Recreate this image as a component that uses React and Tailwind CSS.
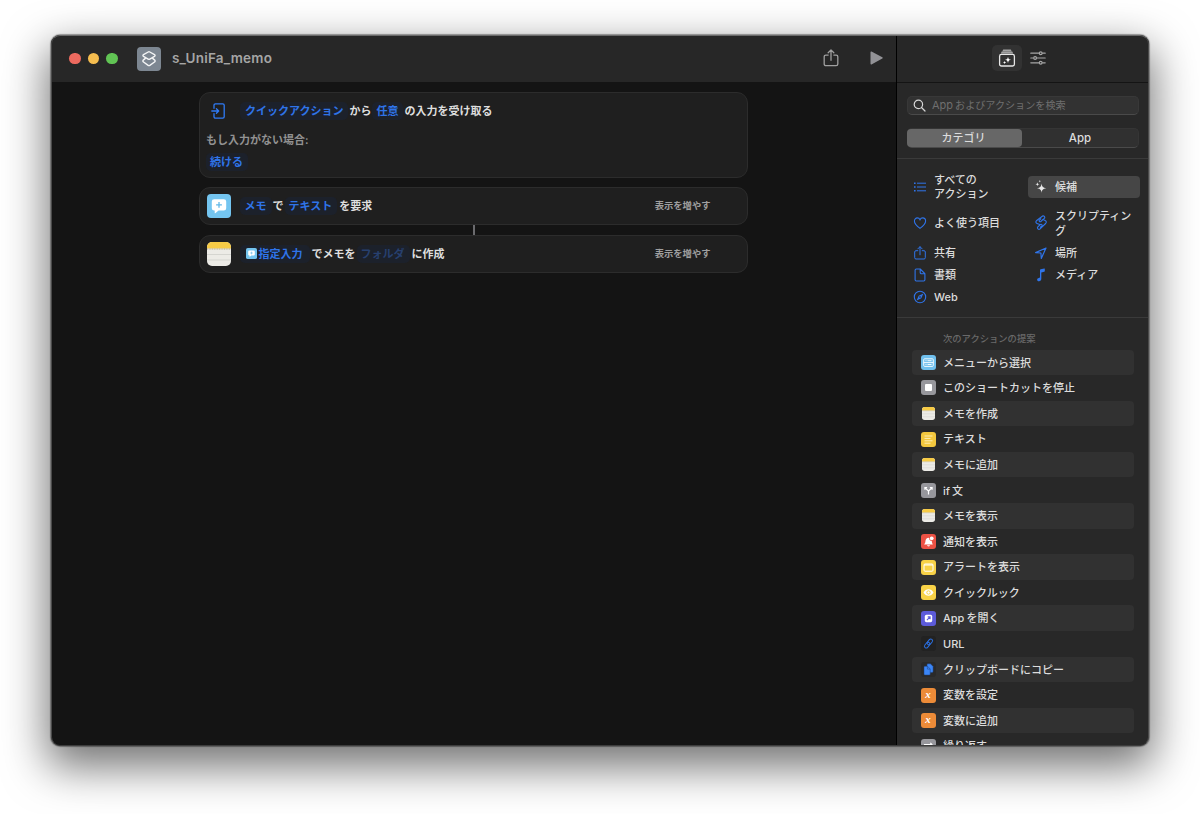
import clsx from 'clsx';

const IconList = () => (
    <svg width="14" height="14" viewBox="0 0 14 14" fill="none" stroke="currentColor" strokeWidth="1">
        <path d="M4 3.200h9M4 7h9M4 10.800h9" />
        <path d="M1 3.200h1.600M1 7h1.600M1 10.800h1.600" strokeWidth="1.400" />
    </svg>
);

const IconSparkles = () => (
    <svg width="14" height="14" viewBox="0 0 14 14" fill="currentColor">
        <path d="M7.600 3.600c.4 3.200 1.200 4.100 4.600 4.700-3.400.6-4.200 1.500-4.600 4.700-.4-3.200-1.200-4.100-4.600-4.700 3.400-.6 4.200-1.500 4.600-4.700z" />
        <path d="M3.400 2.200c.2 1.300.6 1.800 2 2-1.400.2-1.800.7-2 2-.2-1.300-.6-1.800-2-2 1.400-.2 1.800-.7 2-2zM5.800 0c.1.8.4 1.100 1.200 1.200-.8.1-1.100.4-1.200 1.200-.1-.8-.4-1.100-1.200-1.200.8-.1 1.100-.4 1.200-1.200z" />
    </svg>
);

const IconHeart = () => (
    <svg width="14" height="14" viewBox="0 0 14 14" fill="none" stroke="currentColor" strokeWidth="1.100">
        <path d="M7 12.400C3.500 10 1.400 7.600 1.400 5.100 1.400 3.200 2.700 1.900 4.300 1.900c1.200 0 2.200.7 2.700 1.800.5-1.100 1.500-1.800 2.700-1.800 1.600 0 2.900 1.300 2.900 3.200 0 2.500-2.100 4.900-5.600 7.300z" />
    </svg>
);

const IconScript = () => (
    <svg width="14" height="16" viewBox="0 0 14 16" fill="none" stroke="currentColor" strokeWidth="1.100" strokeLinejoin="round" strokeLinecap="round">
        <path d="M8.300 1.200 2.700 5.500c-1.300 1-1 2.500.3 3l2.800 1.100M8.300 1.200c1.500-1 3.200.9 2 2.200L6.800 6.500c-1 .8-2.200-.4-1.400-1.400l1.400-1.200" />
        <path d="m9 4.600 2.200 1c1.300.6 1.500 2 .4 2.900L6.100 13.900M6.100 13.900c-1.500 1.200-3.500-.6-2.300-2.100l2.600-2.300c1.100-.8 2.300.4 1.500 1.400l-1.500 1.300" />
    </svg>
);

const IconShare = ({ size = 14 }) => (
    <svg width={size} height={size} viewBox="0 0 14 14" fill="none" stroke="currentColor" strokeWidth="1" strokeLinecap="round" strokeLinejoin="round">
        <path d="M4.800 4.700H3A1.300 1.300 0 0 0 1.700 6v5.700A1.300 1.300 0 0 0 3 13h8a1.300 1.300 0 0 0 1.300-1.300V6A1.300 1.300 0 0 0 11 4.700H9.200M7 8.800V.8M4.800 2.900 7 .7l2.200 2.200" />
    </svg>
);

const IconLocation = () => (
    <svg width="14" height="14" viewBox="0 0 14 14" fill="none" stroke="currentColor" strokeWidth="1.200" strokeLinejoin="round">
        <path d="M12 2 1.600 6.600l5.300.4.400 5.400z" />
    </svg>
);

const IconDoc = () => (
    <svg width="14" height="14" viewBox="0 0 14 14" fill="none" stroke="currentColor" strokeWidth="1.100" strokeLinejoin="round">
        <path d="M7.200 1H3.300A1.200 1.200 0 0 0 2.100 2.200v9.600A1.200 1.200 0 0 0 3.300 13h7.400a1.200 1.200 0 0 0 1.200-1.200V5.700zM7.200 1v3.500a1.200 1.200 0 0 0 1.200 1.200h3.500" />
    </svg>
);

const IconMusic = () => (
    <svg width="14" height="14" viewBox="0 0 14 14" fill="currentColor">
        <path d="M6 2.200c0-.5.300-.8.700-.9L10.300.6c.3 0 .5.100.5.400v2c0 .4-.2.700-.6.800l-2.900.6v6.300c0 1.400-.9 2.300-2.200 2.500-1.200.1-2-.6-2-1.500 0-1 .8-1.600 1.800-1.800C5.700 9.700 6 9.500 6 8.900z" />
    </svg>
);

const IconSafari = () => (
    <svg width="14" height="14" viewBox="0 0 14 14" fill="none" stroke="currentColor" strokeWidth="1.100">
        <circle cx="7" cy="7" r="5.700" />
        <path d="M10.400 3.600 8.300 8.300 3.600 10.400l2.100-4.700z" fill="currentColor" stroke="none" />
        <circle cx="7" cy="7" r=".8" fill="#282828" stroke="none" />
    </svg>
);

const ShortcutsLogo = () => (
    <svg width="16" height="18" viewBox="0 0 16 18" fill="none" stroke="#f4f5f6" strokeWidth="1.400" strokeLinejoin="round">
        <path d="M7.200 2 2.500 4.700c-.8.500-.8 1.200 0 1.700l4.700 2.700c.5.300 1.100.3 1.600 0l4.700-2.700c.8-.5.8-1.200 0-1.700L8.800 2c-.5-.3-1.100-.3-1.600 0z" />
        <path d="M4.700 8.100 2.500 9.900c-.8.600-.8 1.500 0 2.100l4.700 3.400c.5.300 1.100.3 1.600 0l4.700-3.400c.8-.6.8-1.500 0-2.100l-2.200-1.800" />
    </svg>
);

const IconLibrary = () => (
    <svg width="18" height="18" viewBox="0 0 18 18" fill="none" stroke="#e6e6e6" strokeWidth="1.300">
        <path d="M5.200.4h7.600l.8 1.800H4.400zM3.700 2.600h10.600l.9 1.800H2.800z" fill="#a2a2a2" stroke="none" />
        <rect x="1.600" y="5.400" width="14.800" height="11.600" rx="1.800" />
        <path d="M10 7.400c.3 2.400.9 3.100 3.200 3.400-2.300.3-2.900 1-3.200 3.400-.3-2.400-.9-3.100-3.200-3.400 2.300-.3 2.900-1 3.200-3.400z" fill="#fff" stroke="none" />
        <path d="M6.600 11.700c.2 1.200.5 1.600 1.700 1.800-1.200.2-1.500.6-1.700 1.800-.2-1.200-.5-1.600-1.700-1.800 1.200-.2 1.500-.6 1.700-1.800z" fill="#fff" stroke="none" />
    </svg>
);

const IconSliders = () => (
    <svg width="16" height="14" viewBox="0 0 16 14" fill="none" stroke="#a6a6a6" strokeWidth="1.200" strokeLinecap="round">
        <path d="M.8 2.200h8M12.600 2.200h2.600M.8 7h2.400M7 7h8.200M.8 11.800h8M12.600 11.800h2.600" />
        <circle cx="10.700" cy="2.200" r="1.400" />
        <circle cx="5.100" cy="7" r="1.400" />
        <circle cx="10.700" cy="11.800" r="1.400" />
    </svg>
);

const IconInput = () => (
    <svg width="15" height="16" viewBox="0 0 15 16" fill="none" stroke="#2f7bf6" strokeWidth="1.300" strokeLinecap="round" strokeLinejoin="round">
        <path d="M3 5.300V2.300A1.400 1.400 0 0 1 4.400.9h7.400a1.400 1.400 0 0 1 1.400 1.400v11.400a1.400 1.400 0 0 1-1.400 1.400H4.400A1.400 1.400 0 0 1 3 13.700v-3M.8 8h6.800M5.400 5.700 7.700 8l-2.300 2.300" />
    </svg>
);

const AskIcon = ({ size }) => (
    <svg width={size} height={size} viewBox="0 0 24 24" className="shrink-0">
        <rect width="24" height="24" rx="4" fill="#74c5f0" />
        <path d="M7.200 5.200h9.600a2.400 2.400 0 0 1 2.400 2.400v6.600a2.400 2.400 0 0 1-2.400 2.400h-5.200l-3.300 2.600c-.3.200-.6 0-.6-.3v-2.300h-.5a2.400 2.400 0 0 1-2.400-2.400V7.600a2.400 2.400 0 0 1 2.400-2.400z" fill="#fff" />
        <path d="M12 8v5.800M9.100 10.900h5.800" stroke="#62b8e8" strokeWidth="1.300" />
    </svg>
);

const NotesIcon = ({ size }) => (
    <svg width={size} height={size} viewBox="0 0 24 24" className="shrink-0">
        <rect width="24" height="24" rx="5" fill="#ecebe6" />
        <path d="M0 6.500V5a5 5 0 0 1 5-5h14a5 5 0 0 1 5 5v1.500z" fill="#f7cb45" />
        <path d="M0 7h24" stroke="#b3a98c" strokeWidth="1" strokeDasharray="1 .7" />
        <path d="M0 12.500h24M0 18h24" stroke="#d3d2cd" strokeWidth=".9" />
    </svg>
);

const Tile = ({ className, children }) => (
    <span className={clsx('flex h-[15px] w-[15px] items-center justify-center rounded-[3px]', className)}>
        {children}
    </span>
);

const Glyph = ({ children, ...rest }) => (
    <svg width="15" height="15" viewBox="0 0 15 15" fill="none" stroke="#fff" {...rest}>{children}</svg>
);

const VariableTile = () => (
    <Tile className="bg-[#ec8b38]">
        <span className="font-['Liberation_Serif',serif] text-[11px] leading-[11px] font-bold italic text-white -mt-[2px]">x</span>
    </Tile>
);

const categories = [
    { label: ['すべての', 'アクション'], icon: IconList },
    { label: ['候補'], icon: IconSparkles, active: true },
    { label: ['よく使う項目'], icon: IconHeart },
    { label: ['スクリプティン', 'グ'], icon: IconScript },
    { label: ['共有'], icon: IconShare },
    { label: ['場所'], icon: IconLocation },
    { label: ['書類'], icon: IconDoc },
    { label: ['メディア'], icon: IconMusic },
    { label: ['Web'], icon: IconSafari },
];

const suggestions = [
    {
        label: 'メニューから選択',
        icon: (
            <Tile className="bg-[#70c0ee]">
                <Glyph strokeWidth=".9"><rect x="2.700" y="3.800" width="9.600" height="7.600" rx="1" /><path d="M2.700 7.600h9.600M4.500 5.700h1M6.500 5.700h4M4.500 9.500h1M6.500 9.500h4" /></Glyph>
            </Tile>
        ),
    },
    {
        label: 'このショートカットを停止',
        icon: <Tile className="bg-[#97979c]"><span className="h-[7px] w-[7px] rounded-[1px] bg-white" /></Tile>,
    },
    { label: 'メモを作成', icon: <NotesIcon size={13} /> },
    {
        label: 'テキスト',
        icon: (
            <Tile className="bg-[#f3c73e]">
                <Glyph strokeWidth=".9" stroke="#fff3c4"><path d="M3.500 4h8M3.500 6.400h6M3.500 8.800h8M3.500 11.200h6" /></Glyph>
            </Tile>
        ),
    },
    { label: 'メモに追加', icon: <NotesIcon size={13} /> },
    {
        latin: 'if',
        label: '文',
        icon: (
            <Tile className="bg-[#97979c]">
                <Glyph strokeWidth="1.200"><path d="M7.500 11.600V8.200L4.400 5M7.500 8.200l3.100-3.200M3.900 6.700V4.500h2.200M8.900 4.500h2.200v2.200" /></Glyph>
            </Tile>
        ),
    },
    { label: 'メモを表示', icon: <NotesIcon size={13} /> },
    {
        label: '通知を表示',
        icon: (
            <Tile className="bg-[#ec5245]">
                <Glyph fill="#fff" stroke="none"><path d="M3.200 10.600c0-.7 1.100-1.200 1.200-3 .1-2.400 1.200-3.700 3.500-3.800.1 1.900 1.100 3 2.900 3.200 0 2 .9 2.600 1 3.600zM6 11.200h3c-.2.800-.8 1.200-1.500 1.200S6.200 12 6 11.200z" /><circle cx="10.700" cy="4.300" r="1.900" /></Glyph>
            </Tile>
        ),
    },
    {
        label: 'アラートを表示',
        icon: (
            <Tile className="bg-[#f8d247]">
                <Glyph strokeWidth="1"><rect x="3" y="4" width="9" height="7.200" rx="1" /><path d="M3 5h9" /></Glyph>
            </Tile>
        ),
    },
    {
        label: 'クイックルック',
        icon: (
            <Tile className="bg-[#f8d247]">
                <Glyph stroke="none" fill="#fff"><path d="M2.500 7.500C3.800 5.300 5.500 4.300 7.500 4.300s3.700 1 5 3.200c-1.300 2.200-3 3.200-5 3.200s-3.700-1-5-3.200z" /><circle cx="7.500" cy="7.500" r="1.700" fill="none" stroke="#f8d247" strokeWidth="1" /></Glyph>
            </Tile>
        ),
    },
    {
        latin: 'App',
        label: 'を開く',
        icon: (
            <Tile className="bg-[#5c5bd9]">
                <Glyph stroke="#5c5bd9" strokeWidth="1.100"><rect x="3.800" y="3.800" width="7.400" height="7.400" rx="1.600" fill="#fff" stroke="none" /><path d="M5.900 9.100 9 6M6.700 5.900h2.400v2.400" /></Glyph>
            </Tile>
        ),
    },
    {
        label: 'URL',
        icon: (
            <Tile className="bg-[#222222]">
                <Glyph stroke="#2b6fe0" strokeWidth="1"><g transform="rotate(-50 7.500 7.500)"><rect x="2.200" y="5.700" width="6.400" height="3.600" rx="1.800" /><rect x="6.400" y="5.700" width="6.400" height="3.600" rx="1.800" /></g></Glyph>
            </Tile>
        ),
    },
    {
        label: 'クリップボードにコピー',
        icon: (
            <Tile className="bg-[#2a2a2a]">
                <Glyph stroke="#1f3f78" strokeWidth=".5" fill="#3b86f7"><path d="M6 2.600c0-.5.300-.8.800-.8h2.700l2.600 2.600v5.200c0 .5-.3.800-.8.800H6z" /><path d="M3 5c0-.5.300-.8.800-.8h2.700L9.200 7v5.200c0 .5-.3.800-.8.800H3.800c-.5 0-.8-.3-.8-.8z" /><path d="M6.400 4.300v2.800h2.800" fill="none" /></Glyph>
            </Tile>
        ),
    },
    { label: '変数を設定', icon: <VariableTile /> },
    { label: '変数に追加', icon: <VariableTile /> },
    {
        label: '繰り返す',
        icon: (
            <Tile className="bg-[#97979c]">
                <Glyph strokeWidth="1.100"><path d="M3.500 7V5.500h7.300M9.300 3.800l1.700 1.700-1.700 1.700M11.500 8v1.800H4.200" /></Glyph>
            </Tile>
        ),
    },
];

const Token = ({ dim, className = 'pl-[4px] pr-[5px]', children }) => (
    <span
        className={clsx(
            'flex h-[18px] items-center rounded-[5px] bg-[#1c212b]',
            dim ? 'text-[#27406f]' : 'text-[#2f74e9]',
            className
        )}
    >
        {children}
    </span>
);

const ActionCard = ({ icon, children }) => (
    <div className="flex h-[38.500px] w-[549px] items-center rounded-[11px] border border-[#2c2c2c] bg-[#1f1f1f] pl-[6.500px] pr-[36.500px]">
        {icon}
        <div className="ml-[9px] flex flex-1 items-center gap-px">{children}</div>
        <span className="text-[9.300px] font-semibold text-[#a0a0a0]">表示を増やす</span>
    </div>
);

const Editor = () => (
    <main className="flex w-[846px] flex-col border-r border-black bg-[#141414]">
        <header className="flex h-[47px] shrink-0 items-center bg-[#272727] pl-[18px] pr-[13px]">
            <div className="flex gap-[7px]">
                <span className="h-[11.500px] w-[11.500px] rounded-full bg-[#ed6a5f]" />
                <span className="h-[11.500px] w-[11.500px] rounded-full bg-[#f5bd4f]" />
                <span className="h-[11.500px] w-[11.500px] rounded-full bg-[#61c454]" />
            </div>
            <div className="ml-[19.500px] flex h-6 w-6 items-center justify-center rounded-[4px] bg-[#7d8792]">
                <ShortcutsLogo />
            </div>
            <h1 className="ml-[11px] flex-1 text-[13.500px] font-semibold tracking-[0.2px] text-[#a5a5a5]">s_UniFa_memo</h1>
            <span className="pb-[2px] text-[#a0a0a0]">
                <IconShare size={18} />
            </span>
            <svg width="13" height="14" viewBox="0 0 13 14" className="mb-px ml-[30.500px]" fill="#929296">
                <path d="M.5 1.200c0-.6.5-.9 1-.6l10.800 5.700c.6.300.6 1 0 1.300L1.500 13.400c-.5.300-1 0-1-.6z" />
            </svg>
        </header>
        <div className="flex flex-col items-center pt-[9.500px] text-[11px] font-semibold text-[#dedede]">
            <div className="h-[86px] w-[549px] rounded-[11px] border border-[#2c2c2c] bg-[#1f1f1f] pt-[9.500px]">
                <div className="flex h-[18px] items-center gap-px">
                    <span className="flex w-[39px] pl-[11px]">
                        <IconInput />
                    </span>
                    <Token className="px-[5px]">クイックアクション</Token>
                    <span>から</span>
                    <Token>任意</Token>
                    <span>の入力を受け取る</span>
                </div>
                <p className="mt-[12px] pl-[6px] leading-4 text-[#929292]">もし入力がない場合:</p>
                <div className="mt-[5px] flex pl-[6px]">
                    <Token>続ける</Token>
                </div>
            </div>
            <div className="h-[9px]" />
            <ActionCard icon={<AskIcon size={24} />}>
                <Token className="px-[5px]">メモ</Token>
                <span>で</span>
                <Token>テキスト</Token>
                <span className="ml-px">を要求</span>
            </ActionCard>
            <div className="h-[9.500px] w-[2px] bg-[#6b6b6e]" />
            <ActionCard icon={<NotesIcon size={24} />}>
                <Token className="gap-[2px] pl-[6px] pr-[7px]">
                    <AskIcon size={11} />
                    指定入力
                </Token>
                <span className="ml-px">でメモを</span>
                <Token dim>フォルダ</Token>
                <span className="ml-px">に作成</span>
            </ActionCard>
        </div>
    </main>
);

const Sidebar = () => (
    <aside className="flex flex-1 flex-col overflow-hidden bg-[#282828] text-[11px] font-medium text-[#dcdcdc]">
        <header className="flex h-[48px] shrink-0 items-center border-b border-[#141414] bg-[#272727] pb-px pl-[95px]">
            <span className="flex h-[26px] w-[30px] items-center justify-center rounded-[5px] bg-[#323232]">
                <IconLibrary />
            </span>
            <span className="ml-[8px]">
                <IconSliders />
            </span>
        </header>
        <div className="flex h-[76px] shrink-0 flex-col border-b border-[#3a3a3a] px-[10px] pt-[13px]">
            <div className="flex h-[19px] items-center rounded-[5px] border border-[#383838] border-b-[#4a4a4a] bg-[#323232] pl-[5px]">
                <svg width="13" height="13" viewBox="0 0 13 13" fill="none" stroke="#d6d6d6" strokeWidth="1.200" strokeLinecap="round">
                    <circle cx="5.400" cy="5.400" r="4.200" />
                    <path d="m8.500 8.500 3.500 3.500" />
                </svg>
                <span className="ml-[6px] flex items-center gap-[2px] text-[10.100px] font-normal text-[#6f6f6f]">
                    <span className="text-[11px]">App</span>
                    <span>およびアクションを検索</span>
                </span>
            </div>
            <div className="mt-[13px] flex h-[20px] rounded-[5px] border border-[#353535] border-b-[#4a4a4a] bg-[#303030]">
                <span className="-ml-px flex w-[115px] items-center justify-center rounded-[4px] bg-[#676767] pr-[2px]">カテゴリ</span>
                <span className="flex flex-1 items-center justify-center pt-px text-[11.500px]">App</span>
            </div>
        </div>
        <div className="grid shrink-0 grid-cols-[114px_112px] gap-x-[7px] border-b border-[#3a3a3a] pt-[9.500px] pb-[9px] pl-[10px] leading-[14.500px]">
            {categories.map((item) => {
                const Icon = item.icon;
                return (
                    <div
                        key={item.label[0]}
                        className={clsx(
                            'flex min-h-[22px] items-center self-center rounded-[4px] py-[3.500px] pl-[6px]',
                            item.active && 'bg-[#464646]'
                        )}
                    >
                        <span className={clsx('w-[21px] shrink-0', item.active ? 'text-[#e8e8e8]' : 'text-[#2f74e9]')}>
                            <Icon />
                        </span>
                        <span className="pt-[0.500px]">
                            {item.label.map((line) => (
                                <span key={line} className="block whitespace-nowrap">{line}</span>
                            ))}
                        </span>
                    </div>
                );
            })}
        </div>
        <div className="flex flex-col px-[15px] pt-[13px]">
            <p className="mb-[3px] pl-[31px] text-[9.300px] leading-4 text-[#6a6a6a]">次のアクションの提案</p>
            {suggestions.map((item, i) => (
                <div
                    key={item.label}
                    className={clsx('flex h-[25.600px] shrink-0 items-center rounded-[4px]', i % 2 === 0 && 'bg-[#313131]')}
                >
                    <span className="ml-[8.500px] flex w-[15px] justify-center">{item.icon}</span>
                    <span className="ml-[7.500px] flex gap-[2px] pt-px">
                        {item.latin && <span>{item.latin}</span>}
                        <span>{item.label}</span>
                    </span>
                </div>
            ))}
        </div>
    </aside>
);

const App = () => (
    <div className="h-[814px] w-[1200px] overflow-hidden bg-white pt-[35px] pl-[51px] font-['Inter','Noto_Sans_CJK_JP',sans-serif]">
        <div className="relative h-[711px] w-[1098px] rounded-[9px] shadow-[0_0_1px_1px_rgba(0,0,0,0.35),0_17px_44px_4px_rgba(0,0,0,0.55)]">
            <div className="flex h-full overflow-hidden rounded-[9px]">
                <Editor />
                <Sidebar />
            </div>
            {/* Window rim */}
            <div className="pointer-events-none absolute inset-0 rounded-[9px] border border-t-[#6a6a6a] border-r-[#4a4a4a] border-b-[#3c3c3c] border-l-[#4a4a4a]" />
        </div>
    </div>
);

export default App;
